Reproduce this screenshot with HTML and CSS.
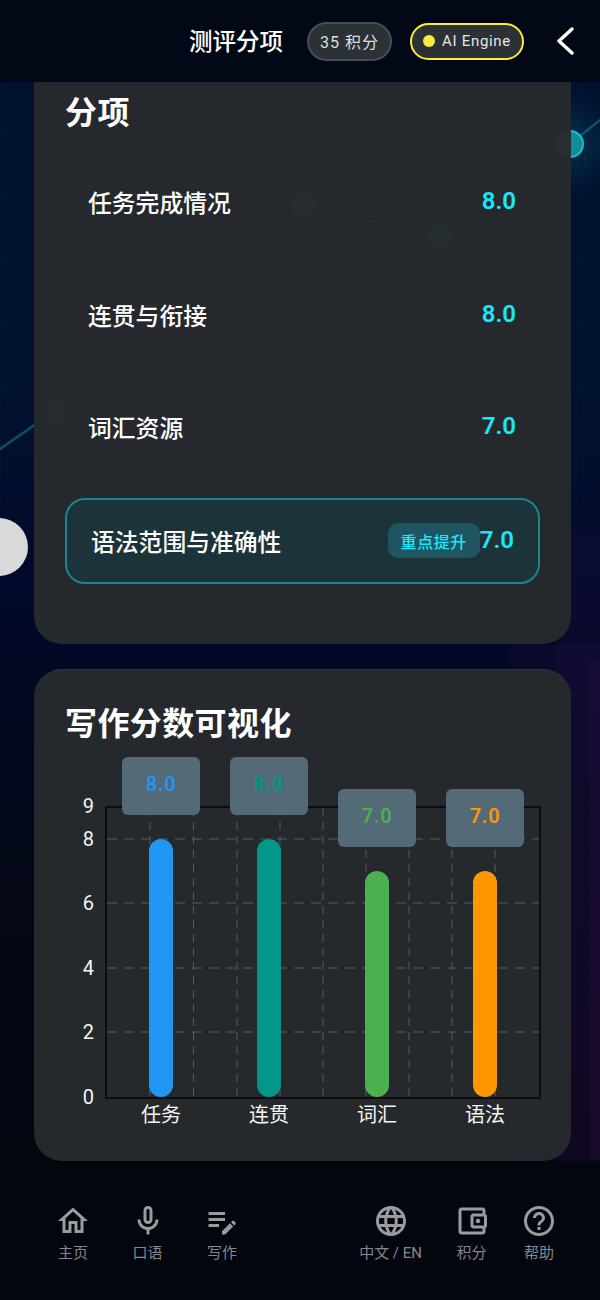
FILE: index.html
```html
<!DOCTYPE html>
<html lang="zh-CN">
<head>
  <meta charset="UTF-8">
  <title>测评分项</title>
  <meta name="viewport" content="width=device-width, initial-scale=1.0">
  <link rel="stylesheet" href="styles.css">
</head>
<body>

  <!-- backdrop picture behind the cards -->
  <svg class="backdrop" width="600" height="1300" viewBox="0 0 600 1300">
    <defs>
      <radialGradient id="glow">
        <stop offset="0" stop-color="#00a5c8" stop-opacity="0.2"/>
        <stop offset="1" stop-color="#00a5c8" stop-opacity="0"/>
      </radialGradient>
      <pattern id="bg-grid" width="64" height="64" patternUnits="userSpaceOnUse">
        <path d="M64 0H0V64" fill="none" stroke="#0c3a5a" stroke-width="1"/>
      </pattern>
    </defs>
    <rect x="0" y="82" width="600" height="420" fill="url(#bg-grid)" opacity="0.25"/>
    <rect x="510" y="645" width="90" height="530" fill="#2a1048" opacity="0.2"/>
    <rect x="556" y="530" width="44" height="640" fill="#2a1048" opacity="0.2"/>
    <rect x="590" y="660" width="10" height="500" fill="#2a1048" opacity="0.25"/>
    <circle cx="570" cy="144" r="50" fill="url(#glow)"/>
    <polyline points="-10,456 56,410 304,206 440,236 570,144 610,112" fill="none" stroke="#0e7f92" stroke-width="2.5" opacity="0.6"/>
    <circle cx="56" cy="410" r="13" fill="#0b6a7b" opacity="0.6"/>
    <circle cx="304" cy="206" r="13" fill="#0b6a7b"/>
    <circle cx="440" cy="236" r="13" fill="#0b6a7b"/>
    <circle cx="570" cy="144" r="13" fill="#148c98" stroke="#14c0c8" stroke-width="2"/>
  </svg>

  <header class="topbar">
    <h1 class="topbar-title">测评分项</h1>
    <div class="pill points-pill">35 积分</div>
    <div class="pill engine-pill"><span class="engine-dot"></span>AI Engine</div>
    <svg class="back-icon" width="18" height="28" viewBox="0 0 18 28">
      <polyline points="16,2 3,14 16,26" fill="none" stroke="#fff" stroke-width="3.4" stroke-linecap="round" stroke-linejoin="round"/>
    </svg>
  </header>

  <div class="float-handle"></div>

  <main class="content">
    <section class="card scores-card">
      <h2 class="card-title">分项</h2>
      <div class="score-row">
        <span class="score-label">任务完成情况</span>
        <span class="score-value">8.0</span>
      </div>
      <div class="score-row">
        <span class="score-label">连贯与衔接</span>
        <span class="score-value">8.0</span>
      </div>
      <div class="score-row">
        <span class="score-label">词汇资源</span>
        <span class="score-value">7.0</span>
      </div>
      <div class="score-row score-row-focus">
        <span class="score-label">语法范围与准确性</span>
        <span class="focus-badge">重点提升</span>
        <span class="score-value">7.0</span>
      </div>
    </section>

    <section class="card chart-card">
      <h2 class="card-title">写作分数可视化</h2>
      <div class="chart">
        <div class="y-axis">
          <span class="y-tick" style="bottom: 100%">9</span>
          <span class="y-tick" style="bottom: 88.6%">8</span>
          <span class="y-tick" style="bottom: 66.7%">6</span>
          <span class="y-tick" style="bottom: 44.4%">4</span>
          <span class="y-tick" style="bottom: 22.2%">2</span>
          <span class="y-tick" style="bottom: 0%">0</span>
        </div>
        <div class="plot">
          <svg class="plot-grid" width="432" height="289" viewBox="0 0 432 289">
            <g class="grid-h">
              <line x1="0" y1="31" x2="432" y2="31"/>
              <line x1="0" y1="95" x2="432" y2="95"/>
              <line x1="0" y1="160" x2="432" y2="160"/>
              <line x1="0" y1="224" x2="432" y2="224"/>
            </g>
            <g class="grid-v">
              <line x1="43" y1="0" x2="43" y2="289"/>
              <line x1="86.5" y1="0" x2="86.5" y2="289"/>
              <line x1="130" y1="0" x2="130" y2="289"/>
              <line x1="173" y1="0" x2="173" y2="289"/>
              <line x1="216" y1="0" x2="216" y2="289"/>
              <line x1="259" y1="0" x2="259" y2="289"/>
              <line x1="302" y1="0" x2="302" y2="289"/>
              <line x1="345" y1="0" x2="345" y2="289"/>
              <line x1="388" y1="0" x2="388" y2="289"/>
            </g>
          </svg>
          <div class="bar-col">
            <div class="bar bar-blue" style="height: 258px"><span class="bar-tip">8.0</span></div>
          </div>
          <div class="bar-col">
            <div class="bar bar-teal" style="height: 258px"><span class="bar-tip">8.0</span></div>
          </div>
          <div class="bar-col">
            <div class="bar bar-green" style="height: 226px"><span class="bar-tip">7.0</span></div>
          </div>
          <div class="bar-col">
            <div class="bar bar-orange" style="height: 226px"><span class="bar-tip">7.0</span></div>
          </div>
        </div>
        <div class="x-axis">
          <span>任务</span>
          <span>连贯</span>
          <span>词汇</span>
          <span>语法</span>
        </div>
      </div>
    </section>
  </main>

  <nav class="bottom-nav">
    <div class="nav-group nav-group-left">
      <div class="nav-item">
        <svg class="nav-icon" viewBox="0 0 24 24"><path d="M12 5.69l5 4.5V18h-2v-6H9v6H7v-7.81l5-4.5M12 3L2 12h3v8h6v-6h2v6h6v-8h3L12 3z"/></svg>
        <span>主页</span>
      </div>
      <div class="nav-item">
        <svg class="nav-icon" viewBox="0 0 24 24"><path d="M12 14c1.66 0 3-1.34 3-3V5c0-1.66-1.34-3-3-3S9 3.34 9 5v6c0 1.66 1.34 3 3 3zm-1-9c0-.55.45-1 1-1s1 .45 1 1v6c0 .55-.45 1-1 1s-1-.45-1-1V5zm6 6c0 2.76-2.24 5-5 5s-5-2.24-5-5H5c0 3.53 2.61 6.43 6 6.92V21h2v-3.08c3.39-.49 6-3.39 6-6.92h-2z"/></svg>
        <span>口语</span>
      </div>
      <div class="nav-item">
        <svg class="nav-icon" viewBox="0 0 24 24"><path d="M3 10h11v2H3v-2zm0-2h11V6H3v2zm0 8h7v-2H3v2zm15.01-3.13l.71-.71c.39-.39 1.02-.39 1.41 0l.71.71c.39.39.39 1.02 0 1.41l-.71.71-2.12-2.12zm-.71.71l-5.3 5.3V21h2.12l5.3-5.3-2.12-2.12z"/></svg>
        <span>写作</span>
      </div>
    </div>
    <div class="nav-group nav-group-right">
      <div class="nav-item">
        <svg class="nav-icon" viewBox="0 0 24 24"><path d="M11.99 2C6.47 2 2 6.48 2 12s4.47 10 9.99 10C17.52 22 22 17.52 22 12S17.52 2 11.99 2zm6.93 6h-2.95c-.32-1.25-.78-2.45-1.38-3.56 1.84.63 3.37 1.91 4.33 3.56zM12 4.04c.83 1.2 1.48 2.53 1.91 3.96h-3.82c.43-1.43 1.08-2.76 1.91-3.96zM4.26 14C4.1 13.36 4 12.69 4 12s.1-1.36.26-2h3.38c-.08.66-.14 1.32-.14 2 0 .68.06 1.34.14 2H4.26zm.82 2h2.95c.32 1.25.78 2.45 1.38 3.56-1.84-.63-3.37-1.9-4.33-3.56zm2.95-8H5.08c.96-1.66 2.49-2.93 4.33-3.56C8.81 5.55 8.35 6.75 8.03 8zM12 19.96c-.83-1.2-1.48-2.53-1.91-3.96h3.82c-.43 1.43-1.08 2.76-1.91 3.96zM14.34 14H9.66c-.09-.66-.16-1.32-.16-2 0-.68.07-1.35.16-2h4.68c.09.65.16 1.32.16 2 0 .68-.07 1.34-.16 2zm.25 5.56c.6-1.11 1.06-2.31 1.38-3.56h2.95c-.96 1.65-2.49 2.93-4.33 3.56zM16.36 14c.08-.66.14-1.32.14-2 0-.68-.06-1.34-.14-2h3.38c.16.64.26 1.31.26 2s-.1 1.36-.26 2h-3.38z"/></svg>
        <span>中文 / EN</span>
      </div>
      <div class="nav-item">
        <svg class="nav-icon" viewBox="0 0 24 24"><path d="M21 7.28V5c0-1.1-.9-2-2-2H5c-1.11 0-2 .9-2 2v14c0 1.1.89 2 2 2h14c1.1 0 2-.9 2-2v-2.28c.59-.35 1-.98 1-1.72V9c0-.74-.41-1.37-1-1.72zM20 9v6h-7V9h7zM5 19V5h14v2h-6c-1.1 0-2 .9-2 2v6c0 1.1.9 2 2 2h6v2H5z"/><circle cx="16" cy="12" r="1.5"/></svg>
        <span>积分</span>
      </div>
      <div class="nav-item">
        <svg class="nav-icon" viewBox="0 0 24 24"><path d="M11 18h2v-2h-2v2zm1-16C6.48 2 2 6.48 2 12s4.48 10 10 10 10-4.48 10-10S17.52 2 12 2zm0 18c-4.41 0-8-3.59-8-8s3.59-8 8-8 8 3.59 8 8-3.59 8-8 8zm0-14c-2.21 0-4 1.79-4 4h2c0-1.1.9-2 2-2s2 .9 2 2c0 2-3 1.75-3 5h2c0-2.25 3-2.5 3-5 0-2.21-1.79-4-4-4z"/></svg>
        <span>帮助</span>
      </div>
    </div>
  </nav>

</body>
</html>
```

FILE: styles.css
```css
/* Reset */
* {
  margin: 0;
  padding: 0;
  box-sizing: border-box;
}

body {
  position: relative;
  width: 600px;
  height: 1300px;
  overflow: hidden;
  display: flex;
  flex-direction: column;
  color: #fff;
  font-family: Roboto, "Noto Sans CJK SC", sans-serif;
  background: linear-gradient(180deg, #01122e 0%, #01122e 30%, #02092a 45%, #030818 65%, #03060f 90%);
}

.backdrop {
  position: absolute;
  top: 0;
  left: 0;
}

/* Top bar */
.topbar {
  position: relative;
  height: 82px;
  flex-shrink: 0;
  display: flex;
  align-items: center;
  justify-content: flex-end;
  padding-right: 26px;
  background: #020816;
}

.topbar-title {
  font-size: 23.5px;
  font-weight: 500;
  margin-right: 24px;
  padding-bottom: 3px;
}

.pill {
  display: flex;
  align-items: center;
  justify-content: center;
  border-radius: 20px;
  background: #2b3134;
}

.points-pill {
  width: 85px;
  height: 39px;
  border: 2px solid #474e51;
  color: #dcdedf;
  font-size: 16px;
  letter-spacing: 1px;
  margin-right: 18px;
}

.engine-pill {
  width: 114px;
  height: 37px;
  border: 2px solid #fdeb3a;
  color: #e4e6e7;
  font-size: 15px;
  letter-spacing: 0.7px;
  gap: 7px;
  margin-right: 32px;
}

.engine-dot {
  width: 12px;
  height: 12px;
  border-radius: 50%;
  background: #ffeb3b;
}

.float-handle {
  position: absolute;
  left: -30px;
  top: 518px;
  width: 58px;
  height: 58px;
  border-radius: 50%;
  background: #d9d9d9;
}

/* Cards */
.content {
  position: relative;
  flex: 1;
  display: flex;
  flex-direction: column;
  gap: 25px;
  padding: 0 29px 0 34px;
}

.card {
  background: rgba(38, 43, 46, 0.965);
  padding: 0 31px;
}

.scores-card {
  height: 562px;
  border-radius: 0 0 28px 28px;
}

.chart-card {
  height: 492px;
  padding-top: 23px;
  border-radius: 28px;
  border-top: 1px solid #30363a;
}

.card-title {
  font-size: 32px;
  font-weight: 700;
  line-height: 62px;
  letter-spacing: 0.4px;
}

.scores-card .card-title {
  margin-bottom: 16px;
}

.score-row {
  height: 86px;
  margin-bottom: 26.5px;
  padding: 0 24px 0 23px;
  display: flex;
  align-items: center;
}

.score-label {
  font-size: 23.8px;
  font-weight: 500;
  flex: 1;
  padding-bottom: 3px;
}

.score-value {
  font-size: 24px;
  font-weight: 600;
  color: #18e9fa;
  padding-bottom: 4px;
}

.score-row-focus {
  padding: 0 24px 0 24px;
  background: #1c3339;
  border: 2px solid #1c8592;
  border-radius: 20px;
}

.score-row-focus .score-label {
  padding-bottom: 0;
}

.score-row-focus .score-value {
  padding-bottom: 2px;
}

.focus-badge {
  width: 92px;
  height: 35px;
  display: flex;
  align-items: center;
  justify-content: center;
  border-radius: 10px;
  background: #1e5561;
  color: #18e9fa;
  font-size: 16px;
  font-weight: 500;
  letter-spacing: 0.6px;
}

/* Chart */
.chart {
  position: relative;
  margin-top: 51px;
  padding-left: 40px;
}

.y-axis {
  position: absolute;
  left: 0;
  top: 0;
  width: 29px;
  height: 291px;
}

.y-tick {
  position: absolute;
  right: 0;
  font-size: 20px;
  line-height: 20px;
  margin-bottom: -10px;
  color: #f4f5f5;
}

.plot {
  position: relative;
  width: 436px;
  height: 293px;
  display: flex;
  align-items: flex-end;
  border: 2px solid #0b0d0e;
}

.plot-grid {
  position: absolute;
  left: 0;
  top: 0;
}

.grid-h line {
  stroke: #4d5f68;
  stroke-width: 1;
  stroke-dasharray: 10 7;
}

.grid-v line {
  stroke: #4d5f68;
  stroke-width: 1;
  stroke-dasharray: 8 6;
}

.bar-col {
  position: relative;
  flex: 1;
  display: flex;
  justify-content: center;
}

.bar {
  position: relative;
  width: 24px;
  border-radius: 12px;
}

.bar-blue { background: #2196f3; color: #2196f3; }
.bar-teal { background: #009688; color: #009688; }
.bar-green { background: #4caf50; color: #4caf50; }
.bar-orange { background: #ff9800; color: #ff9800; }

.bar-tip {
  position: absolute;
  left: 50%;
  bottom: calc(100% + 24px);
  width: 78px;
  height: 58px;
  margin-left: -39px;
  padding-bottom: 4px;
  display: flex;
  align-items: center;
  justify-content: center;
  border-radius: 6px;
  background: #546a76;
  font-size: 20px;
  font-weight: 600;
  letter-spacing: 0.6px;
}

.x-axis {
  display: flex;
  width: 432px;
  margin: 3px 0 0 2px;
}

.x-axis span {
  flex: 1;
  text-align: center;
  font-size: 20px;
  line-height: 26px;
  color: #f4f5f5;
}

/* Bottom nav */
.bottom-nav {
  position: relative;
  height: 139px;
  flex-shrink: 0;
  display: flex;
  justify-content: space-between;
  padding: 42px 43px 0 55px;
  background: #03060f;
}

.nav-group {
  display: flex;
}

.nav-group-left {
  gap: 38.5px;
}

.nav-group-right {
  gap: 31.5px;
}

.nav-item {
  display: flex;
  flex-direction: column;
  align-items: center;
  font-size: 15px;
  line-height: 20px;
  color: #85888c;
}

.nav-icon {
  width: 36px;
  height: 36px;
  margin-bottom: 4px;
  fill: #9a9b9d;
}
```
